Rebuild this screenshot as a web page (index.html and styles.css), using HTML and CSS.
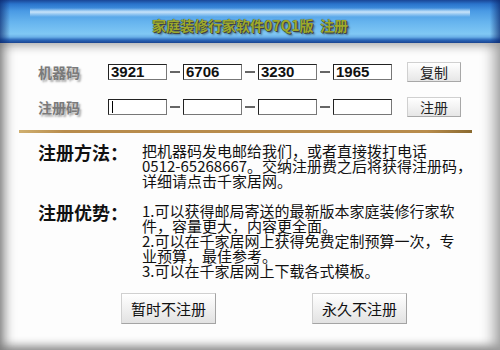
FILE: index.html
```html
<!DOCTYPE html>
<html lang="zh-CN">
<head>
    <meta charset="UTF-8">
    <meta name="viewport" content="width=device-width, initial-scale=1.0">
    <title>注册</title>
    <link rel="stylesheet" href="styles.css">
</head>
<body>
    <div class="titlebar">
        <span class="title">家庭装修行家软件07Q1版&nbsp;&nbsp;注册</span>
    </div>
    <div class="content">
        <div class="code-row">
            <span class="code-label">机器码</span>
            <div class="code-fields">
                <div class="code-box">3921</div><span class="dash"></span>
                <div class="code-box">6706</div><span class="dash"></span>
                <div class="code-box">3230</div><span class="dash"></span>
                <div class="code-box">1965</div>
            </div>
            <button class="small-btn">复制</button>
        </div>
        <div class="code-row">
            <span class="code-label">注册码</span>
            <div class="code-fields">
                <div class="code-box"><span class="caret"></span></div><span class="dash"></span>
                <div class="code-box"></div><span class="dash"></span>
                <div class="code-box"></div><span class="dash"></span>
                <div class="code-box"></div>
            </div>
            <button class="small-btn">注册</button>
        </div>

        <div class="divider"></div>

        <div class="info-row">
            <span class="info-label">注册方法：</span>
            <p class="info-text">把机器码发电邮给我们，或者直接拨打电话<br>0512-65268667。交纳注册费之后将获得注册码，<br>详细请点击千家居网。</p>
        </div>
        <div class="info-row">
            <span class="info-label">注册优势：</span>
            <p class="info-text">1.可以获得邮局寄送的最新版本家庭装修行家软<br>件，容量更大，内容更全面。<br>2.可以在千家居网上获得免费定制预算一次，专<br>业预算，最佳参考。<br>3.可以在千家居网上下载各式模板。</p>
        </div>

        <div class="actions">
            <button class="big-btn">暂时不注册</button>
            <button class="big-btn">永久不注册</button>
        </div>
    </div>
</body>
</html>
```

FILE: styles.css
```css
html, body {
    margin: 0;
    height: 100%;
}
body {
    font-family: 'Noto Sans CJK SC', sans-serif;
    color: #111;
    background-color: #fdfdfd;
    display: flex;
    flex-direction: column;
    overflow: hidden;
}
.titlebar {
    height: 43px;
    flex-shrink: 0;
    display: flex;
    align-items: center;
    justify-content: center;
    background:
        linear-gradient(to right, rgba(10, 40, 110, 0.7), transparent 10px, transparent calc(100% - 10px), rgba(10, 40, 110, 0.7)),
        linear-gradient(to bottom, transparent 8px, rgba(230, 245, 255, 0.8) 12px, transparent 17px) center / 440px 100% no-repeat,
        linear-gradient(to bottom, #1a4696 0, #2a74cc 4px, #4a9ae4 11px, #66b4ee 22px, #80c8f4 34px, #6ab0e8 37px, #2a66b8 40px, #1a4490 43px);
}
.title {
    font-size: 14px;
    font-weight: bold;
    color: #9eaa2c;
    padding-top: 6px;
    text-shadow: 0 0 1px #333, 1px 1px 0 #444, 2px 2px 2px rgba(0, 0, 0, 0.45);
}
.content {
    flex: 1;
    padding: 19px 28px 0 19px;
    box-shadow:
        inset 12px 0 12px -8px #7a7a7a,
        inset -16px 0 14px -10px #a0a0a0,
        inset 0 -10px 10px -6px #8a8a8a,
        inset 0 9px 8px -5px #bcbcbc;
}
.code-row {
    display: flex;
    align-items: center;
    height: 20px;
    padding-left: 19px;
    margin-bottom: 15px;
}
.code-label {
    width: 70px;
    font-size: 14px;
    font-weight: bold;
    color: #7a7a7a;
    text-shadow: 2px 2px 2px #a8a8a8;
}
.code-fields {
    display: flex;
    align-items: center;
}
.code-box {
    width: 55px;
    height: 14px;
    border: 1px solid #222;
    border-right-color: #777;
    border-bottom-color: #777;
    background-color: #fff;
    font-family: 'Liberation Sans', sans-serif;
    font-size: 15px;
    font-weight: bold;
    line-height: 14px;
    padding-left: 2px;
    display: flex;
    align-items: center;
}
.caret {
    width: 1px;
    height: 12px;
    background-color: #000;
    margin-left: 1px;
}
.dash {
    width: 10px;
    height: 2px;
    margin: 0 3px;
    background-color: #666;
}
.small-btn {
    margin-left: 15px;
    width: 54px;
    height: 20px;
    padding: 0;
    font-family: 'Noto Sans CJK SC', sans-serif;
    font-size: 14px;
    line-height: 18px;
    color: #222;
    background: linear-gradient(to bottom, #ffffff, #e6e6e6);
    border: 1px solid #d0d0d0;
    border-right-color: #a8a8a8;
    border-bottom-color: #a8a8a8;
}
.divider {
    height: 3px;
    margin: -2px 0 10px;
    background: linear-gradient(to right, #d0b070, #b88c4c 10%, #b88c4c 90%, #8a6a30);
}
.info-row {
    display: flex;
    align-items: flex-start;
    padding-left: 19px;
    margin-bottom: 15px;
}
.info-label {
    width: 104px;
    flex-shrink: 0;
    font-size: 18px;
    font-weight: bold;
    line-height: 18px;
    color: #111;
}
.info-text {
    margin: 0;
    font-size: 15px;
    line-height: 15px;
    color: #111;
    white-space: nowrap;
}
.actions {
    display: flex;
    gap: 96px;
    padding-left: 102px;
    margin-top: 1px;
}
.big-btn {
    width: 95px;
    height: 31px;
    padding: 0;
    font-family: 'Noto Sans CJK SC', sans-serif;
    font-size: 15px;
    color: #111;
    background: linear-gradient(to bottom, #ffffff, #e2e2e2);
    border: 1px solid #d0d0d0;
    border-right-color: #a4a4a4;
    border-bottom-color: #a4a4a4;
}
```
